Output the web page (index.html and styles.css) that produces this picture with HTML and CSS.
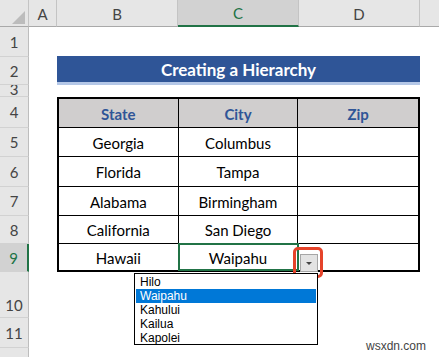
FILE: index.html
```html
<!DOCTYPE html>
<html>
<head>
<meta charset="utf-8">
<link rel="stylesheet" href="styles.css">
</head>
<body>
<div class="sheet">
  <div class="corner"><span class="tri"></span></div>
  <div class="ch">A</div>
  <div class="ch">B</div>
  <div class="ch sel">C</div>
  <div class="ch">D</div>
  <div class="ch last"></div>

  <div class="rh r1">1</div>
  <div class="rh r2">2</div>
  <div class="rh r3">3</div>
  <div class="rh r4">4</div>
  <div class="rh r5">5</div>
  <div class="rh r6">6</div>
  <div class="rh r7">7</div>
  <div class="rh r8">8</div>
  <div class="rh r9 sel">9</div>
  <div class="rh r10">10</div>
  <div class="rh r11">11</div>
  <div class="rh r12"></div>

  <div class="title">Creating a Hierarchy</div>

  <div class="table">
    <div class="cell head">State</div>
    <div class="cell head">City</div>
    <div class="cell head last">Zip</div>

    <div class="cell">Georgia</div>
    <div class="cell">Columbus</div>
    <div class="cell last"></div>

    <div class="cell">Florida</div>
    <div class="cell">Tampa</div>
    <div class="cell last"></div>

    <div class="cell">Alabama</div>
    <div class="cell">Birmingham</div>
    <div class="cell last"></div>

    <div class="cell">California</div>
    <div class="cell">San Diego</div>
    <div class="cell last"></div>

    <div class="cell bottom">Hawaii</div>
    <div class="cell bottom active">Waipahu</div>
    <div class="cell bottom last"></div>
  </div>

  <div class="ddbtn"><span class="arrow"></span></div>
  <div class="redbox"></div>

  <ul class="list">
    <li>Hilo</li>
    <li class="hl">Waipahu</li>
    <li>Kahului</li>
    <li>Kailua</li>
    <li>Kapolei</li>
  </ul>

  <div class="wm">wsxdn.com</div>
</div>
</body>
</html>
```

FILE: styles.css
```css
* { box-sizing: border-box; }
html, body { margin: 0; padding: 0; background: #fff; }
body { width: 439px; height: 357px; overflow: hidden; }

.sheet {
  position: relative;
  width: 439px;
  height: 357px;
  display: grid;
  grid-template-columns: 29px 28px 121px 121px 121px 1fr;
  grid-template-rows: 27px 30px 28px 12px 31px 29px 30px 29px 28px 28px 46px 30px 1fr;
  font-family: "Lato", "Open Sans", sans-serif;
  color: #000;
}

.corner {
  grid-column: 1; grid-row: 1;
  background: #e6e6e6;
  border-right: 1px solid #c4c4c4;
  border-bottom: 1px solid #a9a9a9;
  position: relative;
}
.tri {
  position: absolute;
  left: 12px; top: 11px;
  width: 0; height: 0;
  border-left: 13px solid transparent;
  border-bottom: 13px solid #bcbcbc;
}

.ch {
  grid-row: 1;
  background: #e6e6e6;
  border-right: 1px solid #c4c4c4;
  border-bottom: 1px solid #a9a9a9;
  display: flex; align-items: center; justify-content: center;
  font-size: 15px;
  color: #444;
  padding-top: 1px;
}
.ch.sel {
  background: #d2d2d2;
  border-bottom: 2px solid #217346;
  color: #217346;
}
.ch.last { border-right: none; }

.rh {
  grid-column: 1;
  background: #e6e6e6;
  border-right: 1px solid #bdbdbd;
  border-bottom: 1px solid #d2d2d2;
  display: flex; align-items: center; justify-content: center;
  font-size: 15px;
  color: #444;
  overflow: hidden;
}
.rh.sel {
  background: #d2d2d2;
  border-right: 2px solid #217346;
  color: #217346;
}
.r1 { grid-row: 2; }
.r2 { grid-row: 3; }
.r3 { grid-row: 4; align-items: flex-start; line-height: 8px; }
.r4 { grid-row: 5; }
.r5 { grid-row: 6; }
.r6 { grid-row: 7; }
.r7 { grid-row: 8; }
.r8 { grid-row: 9; }
.r9 { grid-row: 10; }
.r10 { grid-row: 11; align-items: flex-end; padding-bottom: 3px; }
.r11 { grid-row: 12; }
.r12 { grid-row: 13; border-bottom: none; }

.title {
  grid-column: 3 / 6;
  grid-row: 3;
  margin-top: -1px;
  background: #2f5597;
  border-bottom: 3px solid #b4c7e7;
  color: #fff;
  font-weight: 700;
  font-size: 17px;
  display: flex; align-items: center; justify-content: center;
  padding-top: 1px;
}

.table {
  grid-column: 3 / 6;
  grid-row: 5 / 11;
  border: 2px solid #000;
  display: grid;
  grid-template-columns: 1fr 1fr 1fr;
  grid-template-rows: 29px 29px 30px 29px 28px 1fr;
}
.cell {
  border-right: 1px solid #000;
  border-bottom: 1px solid #000;
  display: flex; align-items: center; justify-content: center;
  font-size: 15px;
  padding-top: 1px;
}
.cell.last { border-right: none; }
.cell.bottom { border-bottom: none; }
.cell.head {
  background: #d0cece;
  color: #2f5597;
  font-weight: 700;
}
.cell.active {
  outline: 2px solid #217346;
  outline-offset: -1px;
  position: relative;
}

.ddbtn {
  position: absolute;
  left: 300px; top: 254px;
  width: 18px; height: 18px;
  background: #e3e3e3;
  border: 1px solid #a6a6a6;
  display: flex; align-items: center; justify-content: center;
}
.arrow {
  width: 0; height: 0;
  border-left: 3px solid transparent;
  border-right: 3px solid transparent;
  border-top: 3px solid #444;
  margin-top: 1px;
}
.redbox {
  position: absolute;
  left: 293px; top: 247px;
  width: 30px; height: 31px;
  border: 3px solid #e5432a;
  border-radius: 5px;
}

.list {
  position: absolute;
  left: 134px; top: 273px;
  width: 184px; height: 72px;
  margin: 0;
  padding: 1px 1px 0 1px;
  list-style: none;
  background: #fff;
  border: 1px solid #000;
  font-family: "Liberation Sans", Arial, sans-serif;
  font-size: 12px;
}
.list li {
  height: 14px;
  line-height: 14px;
  padding-left: 4px;
  color: #000;
}
.list li.hl {
  background: #0078d7;
  color: #fff;
}

.wm {
  position: absolute;
  left: 366px; top: 339px;
  font-family: "Liberation Sans", Arial, sans-serif;
  font-size: 12px;
  color: #444;
}
```
